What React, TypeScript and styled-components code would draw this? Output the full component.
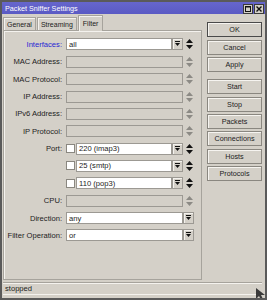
import React from "react";
import styled, { createGlobalStyle } from "styled-components";

const Global = createGlobalStyle`
  html, body { margin: 0; padding: 0; background: #d4d0c8; }
  body { font-family: "Liberation Sans", Arial, sans-serif; }
  * { box-sizing: border-box; }
`;

const Window = styled.div`
  position: relative;
  width: 267px;
  height: 300px;
  background: #d4d0c8;
  border: 2px solid #5a5a5a;
  display: flex;
  flex-direction: column;
  font-size: 7.6px;
  color: #1c1c1c;
  overflow: hidden;
`;

const TitleBar = styled.div`
  height: 14px;
  background: linear-gradient(#6666cc, #5a5ac4);
  display: flex;
  align-items: center;
  justify-content: space-between;
  padding: 1px 1px 0 3px;
  color: #fff;
  font-size: 7.2px;
`;

const TitleButtons = styled.div`
  display: flex;
  gap: 1px;
`;

const TitleBtn = styled.div`
  width: 10px;
  height: 10px;
  background: #d4d0c8;
  border: 1px solid #3a3a3a;
  display: flex;
  align-items: center;
  justify-content: center;
`;

const Body = styled.div`
  flex: 1;
  display: flex;
  gap: 5px;
  padding: 1px 3px 0 1px;
`;

const LeftPane = styled.div`
  width: 199px;
  display: flex;
  flex-direction: column;
`;

const TabStrip = styled.div`
  height: 16px;
  display: flex;
  align-items: flex-end;
  margin-bottom: -1px;
  position: relative;
  z-index: 1;
  font-size: 7px;
`;

const Tab = styled.div<{ $active?: boolean }>`
  height: ${(p) => (p.$active ? 16 : 14)}px;
  padding: 0 ${(p) => (p.$active ? 4 : 3)}px;
  display: flex;
  align-items: center;
  border: 1px solid #a6a39c;
  border-bottom: ${(p) => (p.$active ? "none" : "1px solid #a6a39c")};
  background: #d4d0c8;
  margin-right: ${(p) => (p.$active ? 0 : 1)}px;
  box-shadow: inset 1px 1px 0 #f4f2ee;
`;

const Panel = styled.div`
  height: 250px;
  border: 1px solid #a6a39c;
  box-shadow: inset 1px 1px 0 #f4f2ee;
  padding-top: 7px;
  display: flex;
  flex-direction: column;
  gap: 5.36px;
`;

const Row = styled.div`
  display: grid;
  grid-template-columns: 58px 1fr;
  column-gap: 4px;
  height: 12px;
  align-items: center;
`;

const Label = styled.div<{ $accent?: boolean }>`
  text-align: right;
  white-space: nowrap;
  color: ${(p) => (p.$accent ? "#2626d4" : "#1c1c1c")};
`;

const Controls = styled.div`
  display: flex;
  align-items: center;
  height: 12px;
`;

const TextBox = styled.div<{ $w: number; $disabled?: boolean }>`
  width: ${(p) => p.$w}px;
  height: 12px;
  background: ${(p) => (p.$disabled ? "#d4d0c8" : "#ffffff")};
  border: 1px solid #9c9993;
  padding-left: 2px;
  display: flex;
  align-items: center;
  white-space: nowrap;
`;

const Check = styled.div`
  width: 9px;
  height: 9px;
  background: #fff;
  border: 1px solid #8a8780;
  margin-right: 1px;
`;

const DropBtn = styled.div`
  width: 11px;
  height: 12px;
  background: #d4d0c8;
  border: 1px solid #9c9993;
  box-shadow: inset 1px 1px 0 #f4f2ee;
  display: flex;
  align-items: center;
  justify-content: center;
`;

const SpinWrap = styled.div`
  margin-left: 3px;
  width: 7px;
  display: flex;
  align-items: center;
`;

const RightPane = styled.div`
  width: 55px;
  padding-top: 7px;
  display: flex;
  flex-direction: column;
  gap: 2.3px;
  font-size: 7.2px;
`;

const Button = styled.div<{ $default?: boolean; $sep?: boolean }>`
  height: 15px;
  display: flex;
  align-items: center;
  justify-content: center;
  border: 1px solid ${(p) => (p.$default ? "#4a4a4a" : "#8a8780")};
  box-shadow: inset 1px 1px 0 #f6f4f0;
  margin-top: ${(p) => (p.$sep ? 5 : 0)}px;
  background: #d4d0c8;
`;

const StatusBar = styled.div`
  height: 14px;
  margin: 2px 3px 3px 1px;
  border-top: 1px solid #a6a39c;
  border-bottom: 1px solid #f4f2ee;
  box-shadow: inset 0 1px 0 #f4f2ee;
  display: flex;
  align-items: center;
  padding-left: 2px;
`;

const Cursor = styled.svg`
  position: absolute;
  right: -1px;
  bottom: -2px;
`;

const DropIcon = () => (
  <svg width="5" height="6" viewBox="0 0 5 6">
    <rect x="0" y="0" width="5" height="1" fill="#111" />
    <polygon points="0,2 5,2 2.5,5" fill="#111" />
  </svg>
);

const Spinner = ({ disabled }: { disabled?: boolean }) => (
  <SpinWrap>
    <svg width="7" height="10" viewBox="0 0 7 10">
      <polygon points="3.5,0 7,4 0,4" fill={disabled ? "#8c8a85" : "#111"} />
      <polygon points="0,6 7,6 3.5,10" fill={disabled ? "#8c8a85" : "#111"} />
    </svg>
  </SpinWrap>
);

type FieldRow =
  | { kind: "combo"; label: string; value: string; accent?: boolean }
  | { kind: "disabled"; label: string }
  | { kind: "port"; label: string; value: string }
  | { kind: "select"; label: string; value: string };

const rows: FieldRow[] = [
  { kind: "combo", label: "Interfaces:", value: "all", accent: true },
  { kind: "disabled", label: "MAC Address:" },
  { kind: "disabled", label: "MAC Protocol:" },
  { kind: "disabled", label: "IP Address:" },
  { kind: "disabled", label: "IPv6 Address:" },
  { kind: "disabled", label: "IP Protocol:" },
  { kind: "port", label: "Port:", value: "220 (imap3)" },
  { kind: "port", label: "", value: "25 (smtp)" },
  { kind: "port", label: "", value: "110 (pop3)" },
  { kind: "disabled", label: "CPU:" },
  { kind: "select", label: "Direction:", value: "any" },
  { kind: "select", label: "Filter Operation:", value: "or" },
];

const buttons = [
  { t: "OK", d: true },
  { t: "Cancel" },
  { t: "Apply" },
  { t: "Start", s: true },
  { t: "Stop" },
  { t: "Packets" },
  { t: "Connections" },
  { t: "Hosts" },
  { t: "Protocols" },
];

function renderControls(r: FieldRow) {
  switch (r.kind) {
    case "combo":
      return (
        <>
          <TextBox $w={106}>{r.value}</TextBox>
          <DropBtn>
            <DropIcon />
          </DropBtn>
          <Spinner />
        </>
      );
    case "disabled":
      return (
        <>
          <TextBox $w={117} $disabled />
          <Spinner disabled />
        </>
      );
    case "port":
      return (
        <>
          <Check />
          <TextBox $w={96}>{r.value}</TextBox>
          <DropBtn>
            <DropIcon />
          </DropBtn>
          <Spinner />
        </>
      );
    case "select":
      return (
        <>
          <TextBox $w={117}>{r.value}</TextBox>
          <DropBtn>
            <DropIcon />
          </DropBtn>
        </>
      );
  }
}

export default function App() {
  return (
    <>
      <Global />
      <Window>
        <TitleBar>
          <span>Packet Sniffer Settings</span>
          <TitleButtons>
            <TitleBtn>
              <svg width="6" height="6" viewBox="0 0 6 6">
                <rect x="0.5" y="0.5" width="5" height="5" fill="none" stroke="#111" />
                <rect x="0" y="0" width="6" height="1.5" fill="#111" />
              </svg>
            </TitleBtn>
            <TitleBtn>
              <svg width="6" height="6" viewBox="0 0 6 6">
                <path d="M0.5 0.5 L5.5 5.5 M5.5 0.5 L0.5 5.5" stroke="#111" strokeWidth="1.4" />
              </svg>
            </TitleBtn>
          </TitleButtons>
        </TitleBar>
        <Body>
          <LeftPane>
            <TabStrip>
              <Tab>General</Tab>
              <Tab>Streaming</Tab>
              <Tab $active>Filter</Tab>
            </TabStrip>
            <Panel>
              {rows.map((r, i) => (
                <Row key={i}>
                  <Label $accent={r.kind === "combo" && r.accent}>{r.label}</Label>
                  <Controls>{renderControls(r)}</Controls>
                </Row>
              ))}
            </Panel>
          </LeftPane>
          <RightPane>
            {buttons.map((b) => (
              <Button key={b.t} $default={b.d} $sep={b.s}>
                {b.t}
              </Button>
            ))}
          </RightPane>
        </Body>
        <StatusBar>stopped</StatusBar>
        <Cursor width="10" height="12" viewBox="0 0 10 12">
          <polygon points="0,0 0,11 3,8 5,12 7,11 5,7 9,7" fill="#3a3a3a" />
        </Cursor>
      </Window>
    </>
  );
}
